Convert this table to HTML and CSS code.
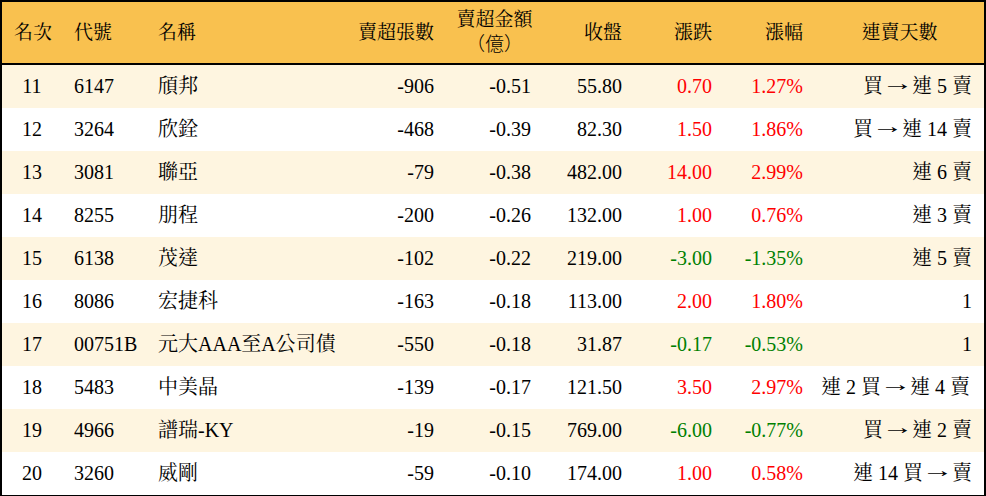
FILE: index.html
```html
<!DOCTYPE html>
<html lang="zh-Hant">
<head>
<meta charset="utf-8">
<title>賣超排行</title>
<link rel="stylesheet" href="styles.css">
</head>
<body>
<table class="rank">
  <colgroup>
    <col class="c-rank"><col class="c-code"><col class="c-name"><col class="c-vol"><col class="c-amt"><col class="c-close"><col class="c-chg"><col class="c-pct"><col class="c-days">
  </colgroup>
  <thead>
    <tr>
      <th class="center">名次</th>
      <th class="left">代號</th>
      <th class="left">名稱</th>
      <th class="right">賣超張數</th>
      <th class="amt-h">賣超金額<br><span class="unit">（億）</span></th>
      <th class="right">收盤</th>
      <th class="right">漲跌</th>
      <th class="right">漲幅</th>
      <th class="center">連賣天數</th>
    </tr>
  </thead>
  <tbody>
    <tr class="odd"><td class="center">11</td><td>6147</td><td>頎邦</td><td class="right">-906</td><td class="right">-0.51</td><td class="right">55.80</td><td class="right up">0.70</td><td class="right up">1.27%</td><td class="right">買<span class="arrow">→</span>連 5 賣</td></tr>
    <tr><td class="center">12</td><td>3264</td><td>欣銓</td><td class="right">-468</td><td class="right">-0.39</td><td class="right">82.30</td><td class="right up">1.50</td><td class="right up">1.86%</td><td class="right">買<span class="arrow">→</span>連 14 賣</td></tr>
    <tr class="odd"><td class="center">13</td><td>3081</td><td>聯亞</td><td class="right">-79</td><td class="right">-0.38</td><td class="right">482.00</td><td class="right up">14.00</td><td class="right up">2.99%</td><td class="right">連 6 賣</td></tr>
    <tr><td class="center">14</td><td>8255</td><td>朋程</td><td class="right">-200</td><td class="right">-0.26</td><td class="right">132.00</td><td class="right up">1.00</td><td class="right up">0.76%</td><td class="right">連 3 賣</td></tr>
    <tr class="odd"><td class="center">15</td><td>6138</td><td>茂達</td><td class="right">-102</td><td class="right">-0.22</td><td class="right">219.00</td><td class="right down">-3.00</td><td class="right down">-1.35%</td><td class="right">連 5 賣</td></tr>
    <tr><td class="center">16</td><td>8086</td><td>宏捷科</td><td class="right">-163</td><td class="right">-0.18</td><td class="right">113.00</td><td class="right up">2.00</td><td class="right up">1.80%</td><td class="right">1</td></tr>
    <tr class="odd"><td class="center">17</td><td>00751B</td><td>元大AAA至A公司債</td><td class="right">-550</td><td class="right">-0.18</td><td class="right">31.87</td><td class="right down">-0.17</td><td class="right down">-0.53%</td><td class="right">1</td></tr>
    <tr><td class="center">18</td><td>5483</td><td>中美晶</td><td class="right">-139</td><td class="right">-0.17</td><td class="right">121.50</td><td class="right up">3.50</td><td class="right up">2.97%</td><td class="right wide">連 2 買<span class="arrow">→</span>連 4 賣</td></tr>
    <tr class="odd"><td class="center">19</td><td>4966</td><td>譜瑞-KY</td><td class="right">-19</td><td class="right">-0.15</td><td class="right">769.00</td><td class="right down">-6.00</td><td class="right down">-0.77%</td><td class="right">買<span class="arrow">→</span>連 2 賣</td></tr>
    <tr><td class="center">20</td><td>3260</td><td>威剛</td><td class="right">-59</td><td class="right">-0.10</td><td class="right">174.00</td><td class="right up">1.00</td><td class="right up">0.58%</td><td class="right">連 14 買<span class="arrow">→</span>賣</td></tr>
  </tbody>
</table>
</body>
</html>
```
FILE: styles.css
```css
html, body {
  margin: 0;
  padding: 0;
  background: #ffffff;
}

body {
  font-family: "Liberation Serif", "Noto Serif CJK TC", "Noto Sans CJK TC", serif;
  font-size: 20px;
  color: #000000;
}

.rank {
  width: 986px;
  table-layout: fixed;
  border-collapse: separate;
  border-spacing: 0;
  border: 2px solid #000000;
}

.c-rank { width: 60px; }
.c-code { width: 84px; }
.c-name { width: 189px; }
.c-vol { width: 111px; }
.c-amt { width: 97px; }
.c-close { width: 91px; }
.c-chg { width: 90px; }
.c-pct { width: 91px; }
.c-days { width: 169px; }

.rank th {
  height: 59px;
  padding: 0 12px;
  background: #f9c14f;
  border-bottom: 2px solid #000000;
  font-weight: normal;
  font-size: 19px;
  line-height: 23px;
  vertical-align: middle;
  white-space: nowrap;
}

.rank th.amt-h {
  text-align: center;
  padding: 0 8px 2px 8px;
}

.rank th .unit {
  font-family: "Noto Sans CJK TC", sans-serif;
  font-weight: 300;
}

.rank td {
  height: 41px;
  padding: 0 12px 2px 12px;
  line-height: 22px;
  vertical-align: middle;
  white-space: nowrap;
  text-align: left;
}

.rank td.wide {
  padding-right: 14px;
  padding-left: 0;
}

.rank tr.odd td {
  background: #fef5e0;
}

.rank .center { text-align: center; }
.rank .left { text-align: left; }
.rank .right { text-align: right; }

.rank td.up { color: #ff0000; }
.rank td.down { color: #008000; }

.arrow {
  display: inline-block;
  width: 29px;
  font-family: "Liberation Serif", serif;
  font-size: 20px;
  text-align: center;
  transform: translateY(-3px) scaleX(1.6);
}
```
